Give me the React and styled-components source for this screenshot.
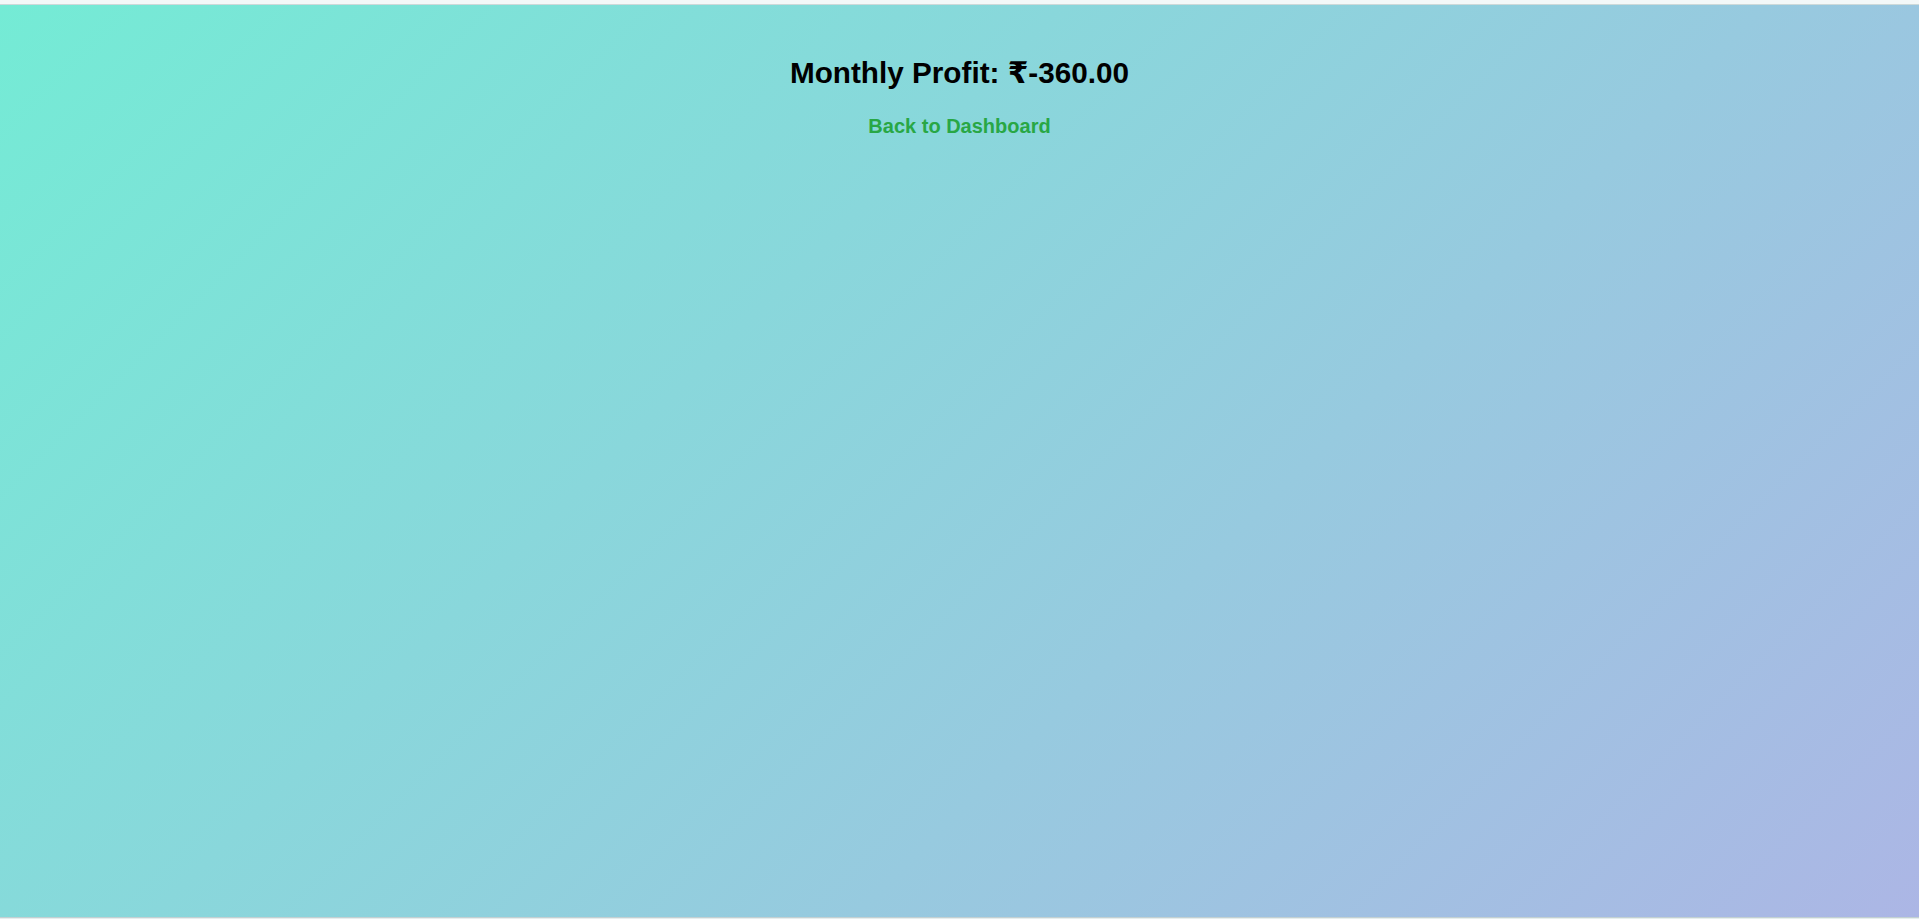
import React from 'react'
import styled, { createGlobalStyle } from 'styled-components'

const GlobalStyle = createGlobalStyle`
  html, body {
    margin: 0;
    padding: 0;
    background: #f3f8f8;
  }
  body {
    font-family: 'Liberation Sans', Arial, 'DejaVu Sans', sans-serif;
  }
`

const TopStrip = styled.div`
  height: 4px;
  background: #f3f8f8;
  border-bottom: 1px solid #cdd9d9;
`

const Page = styled.main`
  height: 912px;
  box-sizing: border-box;
  padding-top: 50px;
  display: flex;
  flex-direction: column;
  align-items: center;
  background: linear-gradient(135deg, #74ebd5, #acb6e5);
`

const BottomStrip = styled.div`
  height: 1px;
  background: #c3d0d2;
  border-bottom: 1px solid #e6eeee;
`

const Title = styled.h1`
  margin: 0;
  font-size: 29.7px;
  font-weight: 700;
  color: #000;
  text-align: center;
`

const BackLink = styled.a`
  margin-top: 25px;
  font-size: 20px;
  font-weight: 700;
  color: #28a745;
  text-decoration: none;
  cursor: pointer;

  &:hover {
    text-decoration: underline;
  }
`

const App = () => {
  const profit = -360

  return (
    <>
      <GlobalStyle />
      <TopStrip />
      <Page>
        <Title>Monthly Profit: ₹{profit.toFixed(2)}</Title>
        <BackLink href="#">Back to Dashboard</BackLink>
      </Page>
      <BottomStrip />
    </>
  )
}

export default App
